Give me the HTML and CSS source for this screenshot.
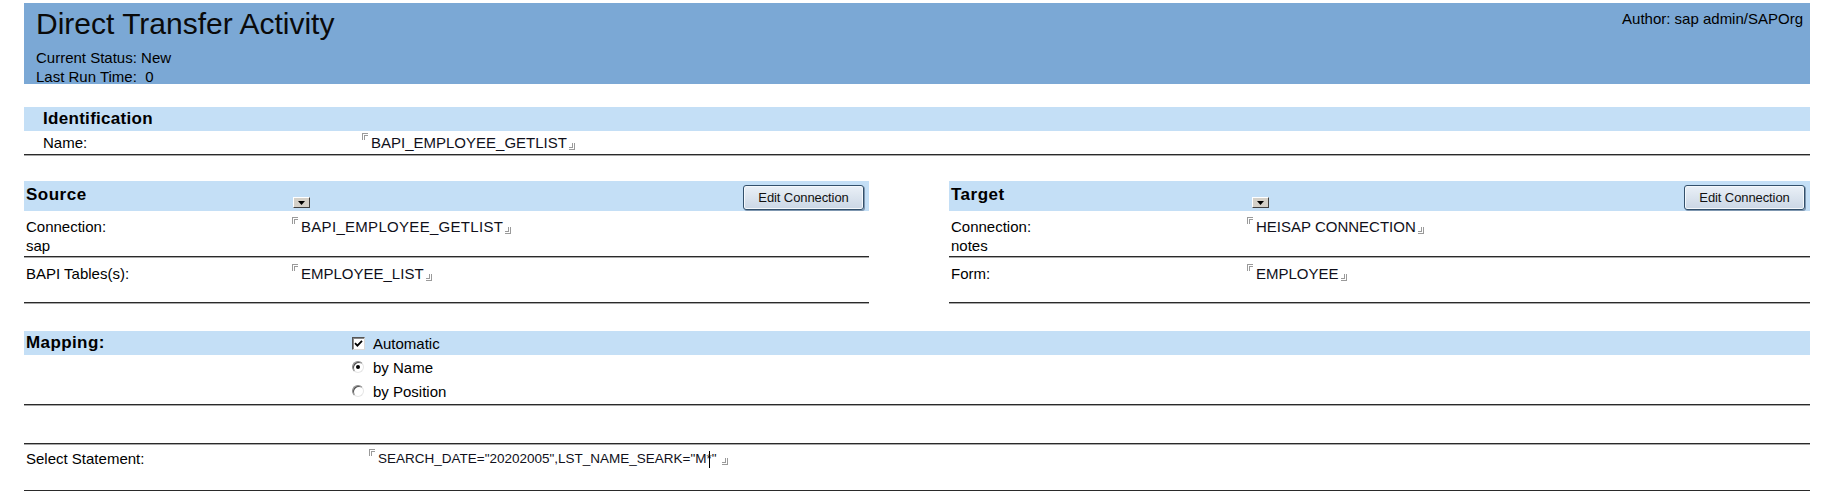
FILE: index.html
```html
<!DOCTYPE html>
<html>
<head>
<meta charset="utf-8">
<title>Direct Transfer Activity</title>
<link rel="stylesheet" href="styles.css">
</head>
<body>
<div class="header">
  <div class="header-main">
    <h1 class="title">Direct Transfer Activity</h1>
    <div class="status status-first">Current Status: New</div>
    <div class="status">Last Run Time:&nbsp; 0</div>
  </div>
  <div class="author">Author: sap admin/SAPOrg</div>
</div>

<div class="page">
  <section class="ident">
    <div class="bar bar-ident"><span class="bar-title">Identification</span></div>
    <div class="row row-name rule">
      <span class="label">Name:</span>
      <span class="value"><i class="mk-open"></i>BAPI_EMPLOYEE_GETLIST<i class="mk-close"></i></span>
    </div>
  </section>

  <div class="pair">
    <section class="conn conn-source">
      <div class="bar bar-conn">
        <span class="conn-title">Source</span>
        <span class="dropdown"><svg width="7" height="4" viewBox="0 0 7 4"><path d="M0 0H7L3.5 4Z" fill="#000"/></svg></span>
        <button class="edit-btn">Edit Connection</button>
      </div>
      <div class="row row-conn rule">
        <span class="label">Connection:<br>sap</span>
        <span class="value value-wide"><i class="mk-open"></i>BAPI_EMPLOYEE_GETLIST<i class="mk-close"></i></span>
      </div>
      <div class="row row-detail rule">
        <span class="label">BAPI Tables(s):</span>
        <span class="value"><i class="mk-open"></i>EMPLOYEE_LIST<i class="mk-close"></i></span>
      </div>
    </section>

    <section class="conn conn-target">
      <div class="bar bar-conn">
        <span class="conn-title">Target</span>
        <span class="dropdown"><svg width="7" height="4" viewBox="0 0 7 4"><path d="M0 0H7L3.5 4Z" fill="#000"/></svg></span>
        <button class="edit-btn">Edit Connection</button>
      </div>
      <div class="row row-conn rule">
        <span class="label">Connection:<br>notes</span>
        <span class="value"><i class="mk-open"></i>HEISAP CONNECTION<i class="mk-close"></i></span>
      </div>
      <div class="row row-detail rule">
        <span class="label">Form:</span>
        <span class="value"><i class="mk-open"></i>EMPLOYEE<i class="mk-close"></i></span>
      </div>
    </section>
  </div>

  <section class="mapping">
    <div class="bar bar-map">
      <span class="map-title">Mapping:</span>
      <span class="opt"><span class="checkbox"><svg width="9" height="9" viewBox="0 0 9 9"><path d="M1 4.2L3.4 6.6L8 1.8" fill="none" stroke="#000" stroke-width="1.8"/></svg></span>Automatic</span>
    </div>
    <div class="map-options rule">
      <span class="opt opt-radio"><span class="radio radio-on"></span>by Name</span>
      <span class="opt opt-radio"><span class="radio"></span>by Position</span>
    </div>
  </section>

  <div class="spacer rule"></div>

  <div class="row row-select rule">
    <span class="label">Select Statement:</span>
    <span class="value value-narrow"><i class="mk-open"></i>SEARCH_DATE="20202005",LST_NAME_SEARK="M<span class="caret-wrap">*<span class="caret"></span></span>" <i class="mk-close"></i></span>
  </div>
</div>
</body>
</html>
```

FILE: styles.css
```css
html, body {
  margin: 0;
  padding: 0;
  background: #ffffff;
}

body {
  font-family: "Liberation Sans", Arial, sans-serif;
  color: #000;
  padding-top: 3px;
}

.header {
  box-sizing: border-box;
  margin-left: 24px;
  width: 1786px;
  height: 81px;
  background: #7ba8d5;
  padding: 4px 7px 0 12px;
  display: flex;
  justify-content: space-between;
  align-items: flex-start;
}

.title {
  margin: 0;
  font-weight: normal;
  font-size: 30px;
  line-height: 33px;
  color: #0a0a0a;
}

.status {
  font-size: 15px;
  line-height: 19px;
}

.status-first {
  margin-top: 8px;
}

.author {
  font-size: 15px;
  line-height: 18px;
  margin-top: 3px;
}

.page {
  margin-left: 24px;
  width: 1786px;
}

.rule {
  border-bottom: 1px solid #2a2a2a;
  box-shadow: 0 1px 0 #a8a8a8;
}

.bar {
  background: #c4dff6;
}

.label {
  font-size: 15px;
  line-height: 19px;
}

.value {
  font-size: 15px;
  line-height: 19px;
  color: #10101a;
}

.value-wide {
  letter-spacing: 0.3px;
}

.value-narrow {
  font-size: 13.5px;
}

.mk-open {
  display: inline-block;
  width: 3px;
  height: 4px;
  border-top: 3px double #9a9a9a;
  border-left: 3px double #9a9a9a;
  vertical-align: top;
  margin: 0 3px 0 0;
}

.mk-close {
  display: inline-block;
  width: 3px;
  height: 4px;
  border-bottom: 3px double #9a9a9a;
  border-right: 3px double #9a9a9a;
  vertical-align: -2px;
  margin-left: 2px;
}

/* Identification */
.ident {
  margin-top: 23px;
}

.bar-ident {
  height: 24px;
  display: flex;
  align-items: center;
  padding-left: 19px;
}

.bar-title {
  font-weight: bold;
  font-size: 17px;
  letter-spacing: 0.3px;
}

.row {
  display: grid;
  align-items: start;
}

.row-name {
  grid-template-columns: 319px 1fr;
  padding-left: 19px;
  height: 23px;
  align-items: center;
}

/* Source / Target */
.pair {
  margin-top: 26px;
  display: flex;
  gap: 80px;
}

.conn-source {
  width: 845px;
}

.conn-target {
  width: 861px;
}

.bar-conn {
  height: 30px;
  display: flex;
  align-items: flex-start;
  padding-left: 2px;
  padding-right: 5px;
}

.conn-title {
  font-weight: bold;
  font-size: 17px;
  letter-spacing: 0.5px;
  line-height: 19px;
  margin-top: 4px;
}

.conn-source .conn-title {
  width: 267px;
}

.conn-target .conn-title {
  width: 301px;
}

.dropdown {
  box-sizing: border-box;
  width: 17px;
  height: 11px;
  margin-top: 16px;
  background: #d4d0c8;
  border: 1px solid;
  border-color: #ffffff #404040 #404040 #ffffff;
  display: flex;
  align-items: center;
  justify-content: center;
}

.edit-btn {
  margin-left: auto;
  margin-top: 4px;
  box-sizing: border-box;
  width: 121px;
  height: 25px;
  padding: 0;
  font-family: "Liberation Sans", Arial, sans-serif;
  font-size: 13px;
  letter-spacing: -0.1px;
  color: #111;
  border: 1px solid #33506b;
  border-radius: 3px;
  background: linear-gradient(#eaf0f7, #cbd7e5);
  box-shadow: inset 0 0 0 1px #f4f8fc, 1px 1px 0 #7f97b0;
}

.row-conn {
  padding: 6px 0 2px 2px;
  height: 46px;
  box-sizing: border-box;
}

.row-detail {
  padding: 7px 0 0 2px;
  height: 46px;
  box-sizing: border-box;
}

.conn-source .row {
  grid-template-columns: 266px 1fr;
}

.conn-target .row {
  grid-template-columns: 296px 1fr;
}

/* Mapping */
.mapping {
  margin-top: 28px;
}

.bar-map {
  height: 24px;
  display: flex;
  align-items: center;
  padding-left: 2px;
}

.map-title {
  width: 326px;
  font-weight: bold;
  font-size: 17px;
  letter-spacing: 0.4px;
}

.opt {
  display: flex;
  align-items: center;
  font-size: 15px;
  line-height: 19px;
}

.checkbox {
  box-sizing: border-box;
  width: 13px;
  height: 13px;
  margin-right: 8px;
  background: #fff;
  border: 1px solid;
  border-color: #555 #d8d8d8 #d8d8d8 #555;
  box-shadow: inset 1px 1px 0 #888;
  display: flex;
  align-items: center;
  justify-content: center;
}

.map-options {
  display: flex;
  flex-direction: column;
  padding: 0 0 0 328px;
  height: 49px;
}

.opt-radio {
  height: 24px;
}

.radio {
  box-sizing: border-box;
  width: 12px;
  height: 12px;
  margin-right: 9px;
  border-radius: 50%;
  background: #fff;
  border: 1px solid;
  border-color: #8a8a8a #e6e6e6 #e6e6e6 #8a8a8a;
  box-shadow: inset 1px 1px 0 #505050;
  display: flex;
  align-items: center;
  justify-content: center;
}

.radio-on::after {
  content: "";
  width: 4px;
  height: 4px;
  border-radius: 50%;
  background: #000;
}

.spacer {
  height: 38px;
}

.row-select {
  grid-template-columns: 343px 1fr;
  padding: 5px 0 0 2px;
  height: 47px;
  box-sizing: border-box;
}

.caret-wrap {
  position: relative;
}

.caret {
  position: absolute;
  left: 2px;
  top: 0;
  width: 1px;
  height: 17px;
  background: #000;
}
```
